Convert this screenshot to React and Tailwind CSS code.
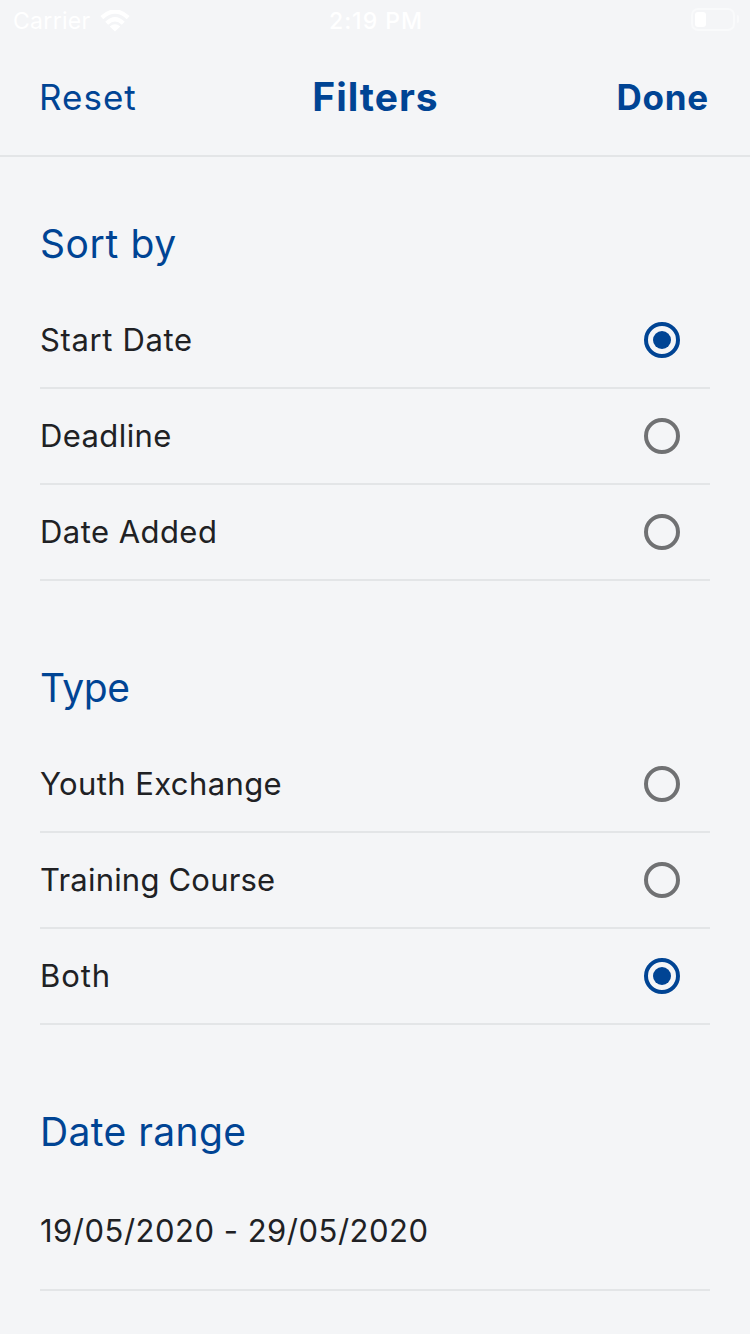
function Radio({ on }) {
  return (
    <span className={`mr-[30px] flex h-9 w-9 items-center justify-center rounded-full border-4 ${on ? 'border-[#004494]' : 'border-[#707173]'}`}>
      {on && <span className="h-[18px] w-[18px] rounded-full bg-[#004494]" />}
    </span>
  );
}

function Heading({ tracking, children }) {
  return <h2 className={`flex h-[52px] items-center text-[39px] leading-none text-[#004494] ${tracking}`}>{children}</h2>;
}

function Section({ title, titleTracking, items, selected }) {
  return (
    <section className="pt-[60px]">
      <Heading tracking={titleTracking}>{title}</Heading>
      <div className="mt-6">
        {items.map(([item, tracking]) => (
          <div key={item} className="flex h-24 items-center justify-between border-b-2 border-[#e3e5e7]">
            <span className={`pb-px text-[31px] leading-none text-[#202124] ${tracking}`}>{item}</span>
            <Radio on={item === selected} />
          </div>
        ))}
      </div>
    </section>
  );
}

const sortOptions = [
  ['Start Date', 'tracking-[0.65px]'],
  ['Deadline', 'tracking-[0.4px]'],
  ['Date Added', 'tracking-[0.45px]'],
];

const typeOptions = [
  ['Youth Exchange', 'tracking-[0.4px]'],
  ['Training Course', 'tracking-[0.2px]'],
  ['Both', 'tracking-[0.9px]'],
];

export default function App() {
  return (
    <div className="h-[1334px] w-[750px] overflow-hidden bg-[#f4f5f7] font-['Inter',sans-serif] font-[370]">
      <div className="grid h-10 grid-cols-3 items-center pl-[13px] pr-[11px] text-[23px] leading-none text-white">
        <div className="flex items-center gap-[9px] pt-0.5">
          <span className="tracking-[0.3px]">Carrier</span>
          <svg className="-mt-px" width="30" height="22" viewBox="0 0 30 22" fill="none" stroke="white" strokeWidth="4.2">
            <path d="M1.8 7.6Q15-4.6 28.2 7.6M6.7 13.2Q15 5.2 23.3 13.2" />
            <path d="M9.7 16.4Q15 11.9 20.3 16.4L15 21.5Z" fill="white" stroke="none" />
          </svg>
        </div>
        <span className="pt-0.5 text-center font-medium tracking-[1px]">2:19 PM</span>
        <div className="flex items-center justify-end gap-0.5 pb-0.5">
          <div className="h-[23px] w-[44px] rounded-[7px] border-2 border-[#f9fafb] p-0.5"><div className="h-full w-[11px] rounded-[3px] bg-white" /></div>
          <div className="h-2 w-[2px] rounded-r bg-[#f9fafb]" />
        </div>
      </div>
      <header className="grid h-[117px] grid-cols-3 items-center border-b-2 border-[#e3e5e7] pl-[39px] pr-[41px] text-[#004494]">
        <span className="text-[35px] font-normal tracking-[1px]">Reset</span>
        <h1 className="pl-[3px] text-center text-[39px] font-[650] tracking-[1px]">Filters</h1>
        <span className="text-right text-[35px] font-[650] tracking-[0.8px]">Done</span>
      </header>
      <main className="flex flex-col gap-5 px-10">
        <Section title="Sort by" titleTracking="tracking-[0.6px]" items={sortOptions} selected="Start Date" />
        <Section title="Type" titleTracking="tracking-[-0.4px]" items={typeOptions} selected="Both" />
        <section className="pt-[60px]">
          <Heading tracking="tracking-[0.4px]">Date range</Heading>
          <div className="mt-6 flex h-[110px] items-center border-b-2 border-[#e3e5e7] pb-2 text-[31px] tracking-[0.5px] text-[#202124]">19/05/2020 - 29/05/2020</div>
        </section>
      </main>
    </div>
  );
}
